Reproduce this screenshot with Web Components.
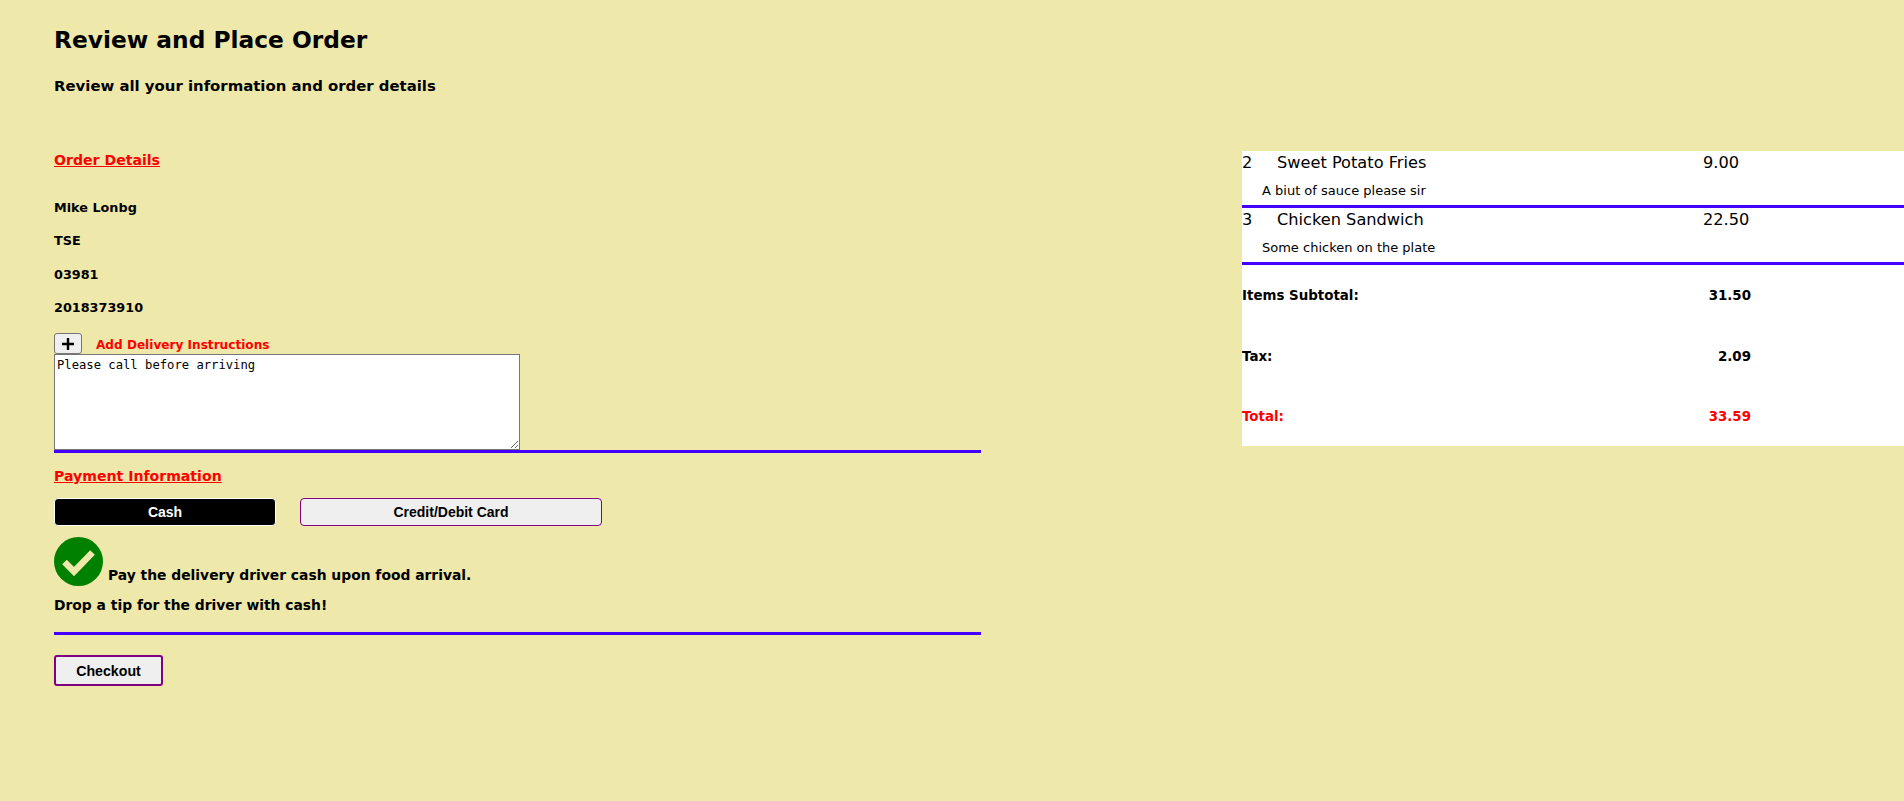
<!DOCTYPE html>
<html lang="en">
<head>
<meta charset="utf-8">
<title>Review and Place Order</title>
<style>
    html, body { margin: 0; height: 100%; background: #eee8aa; }
    body { font-family: "DejaVu Sans", Verdana, sans-serif; color: #000; }
</style>
</head>
<body>
<checkout-page>
    <page-header slot="header" title="Review and Place Order" subtitle="Review all your information and order details"></page-header>
    <div slot="left">
        <section-title style="--top:30px">Order Details</section-title>
        <customer-info></customer-info>
        <delivery-notes></delivery-notes>
        <blue-rule></blue-rule>
        <section-title style="--top:15px">Payment Information</section-title>
        <payment-picker></payment-picker>
        <blue-rule style="--top:18px"></blue-rule>
        <checkout-button></checkout-button>
    </div>
    <order-summary slot="right">
        <order-item qty="2" name="Sweet Potato Fries" price="9.00" note="A biut of sauce please sir"></order-item>
        <order-item qty="3" name="Chicken Sandwich" price="22.50" note="Some chicken on the plate"></order-item>
        <summary-line label="Items Subtotal:" value="31.50"></summary-line>
        <summary-line label="Tax:" value="2.09"></summary-line>
        <summary-line label="Total:" value="33.59" style="color:#f00"></summary-line>
    </order-summary>
</checkout-page>

<script>
// Page shell: header on top, then the two columns
class CheckoutPage extends HTMLElement {
    constructor() {
        super();
        this.attachShadow({ mode: 'open' });
        this.shadowRoot.innerHTML = `
            <style>
                :host { display: block; padding-left: 54px; }
                .cols { display: grid; grid-template-columns: 927px 1fr; column-gap: 261px; }
            </style>
            <slot name="header"></slot>
            <div class="cols">
                <slot name="left"></slot>
                <slot name="right"></slot>
            </div>
        `;
    }
}

class PageHeader extends HTMLElement {
    constructor() {
        super();
        this.attachShadow({ mode: 'open' });
    }

    connectedCallback() {
        this.shadowRoot.innerHTML = `
            <style>
                :host { display: block; height: 122px; padding-top: 25px; box-sizing: border-box; }
                h1 { margin: 0; font-size: 23.3px; line-height: 29px; font-weight: bold; }
                h2 { margin: 23px 0 0; font-size: 14.9px; line-height: 19px; font-weight: bold; }
            </style>
            <h1>${this.getAttribute('title')}</h1>
            <h2>${this.getAttribute('subtitle')}</h2>
        `;
        this.removeAttribute('title');
    }
}

class SectionTitle extends HTMLElement {
    constructor() {
        super();
        this.attachShadow({ mode: 'open' });
        this.shadowRoot.innerHTML = `
            <style>
                :host {
                    display: block;
                    margin-top: var(--top, 0);
                    font-size: 14.1px;
                    line-height: 17px;
                    font-weight: bold;
                    color: #f00;
                    text-decoration: underline;
                }
            </style>
            <slot></slot>
        `;
    }
}

class CustomerInfo extends HTMLElement {
    constructor() {
        super();
        this.attachShadow({ mode: 'open' });
        this.shadowRoot.innerHTML = `
            <style>
                :host {
                    display: flex;
                    flex-direction: column;
                    gap: 18px;
                    margin-top: 31px;
                    font-size: 12.8px;
                    line-height: 15.4px;
                    font-weight: bold;
                }
            </style>
            <div>Mike Lonbg</div>
            <div>TSE</div>
            <div>03981</div>
            <div>2018373910</div>
        `;
    }
}

class DeliveryNotes extends HTMLElement {
    constructor() {
        super();
        this.attachShadow({ mode: 'open' });
        this.shadowRoot.innerHTML = `
            <style>
                :host { display: block; margin-top: 17.4px; }
                .head { display: flex; align-items: center; height: 21px; }
                button {
                    width: 28px;
                    height: 21px;
                    padding: 0;
                    box-sizing: border-box;
                    background: #efefef;
                    border: 1px solid #767676;
                    border-radius: 3px;
                    display: flex;
                    align-items: center;
                    justify-content: center;
                }
                label {
                    margin-left: 14px;
                    padding-top: 2px;
                    font-size: 12.1px;
                    font-weight: bold;
                    color: #f00;
                }
                textarea {
                    display: block;
                    width: 466px;
                    height: 96px;
                    box-sizing: border-box;
                    margin: 0;
                    padding: 3px 2px 2px;
                    border: 1px solid #767676;
                    background: #fff;
                    color: #000;
                    font-family: "DejaVu Sans Mono", monospace;
                    font-size: 12.2px;
                    border-radius: 0;
                }
            </style>
            <div class="head">
                <button type="button" aria-label="Add">
                    <svg width="12" height="12" viewBox="0 0 12 12"><path d="M6 0v12M0 6h12" stroke="#000" stroke-width="2.400" fill="none"/></svg>
                </button>
                <label>Add Delivery Instructions</label>
            </div>
            <textarea>Please call before arriving</textarea>
        `;
    }
}

class BlueRule extends HTMLElement {
    constructor() {
        super();
        this.attachShadow({ mode: 'open' });
        this.shadowRoot.innerHTML = `
            <style>
                :host { display: block; height: 3px; margin-top: var(--top, 0); background: #4400ff; }
            </style>
        `;
    }
}

class PaymentPicker extends HTMLElement {
    constructor() {
        super();
        this.attachShadow({ mode: 'open' });
        this.shadowRoot.innerHTML = `
            <style>
                :host { display: block; margin-top: 13px; font-size: 13.87px; font-weight: bold; }
                .tabs { display: flex; gap: 24px; }
                button {
                    height: 28px;
                    padding: 0;
                    box-sizing: border-box;
                    border-radius: 4px;
                    font: bold 14px "Liberation Sans", Arial, sans-serif;
                }
                .cash { width: 222px; background: #000; color: #fff; border: 1px solid #fff; }
                .card { width: 302px; background: #efefef; color: #000; border: 1px solid #800080; }
                .msg { display: flex; align-items: flex-end; gap: 5px; margin-top: 11px; }
                .msg span { line-height: 17px; margin-bottom: 2px; }
                .tip { margin-top: 11px; line-height: 17px; }
            </style>
            <div class="tabs">
                <button class="cash" type="button">Cash</button>
                <button class="card" type="button">Credit/Debit Card</button>
            </div>
            <div class="msg">
                <svg width="49" height="49" viewBox="0 0 49 49">
                    <circle cx="24.5" cy="24.5" r="24.5" fill="#008000"/>
                    <path d="M10.500 25l9.500 9.500L38.500 15.500" fill="none" stroke="#eee8aa" stroke-width="6.500"/>
                </svg>
                <span>Pay the delivery driver cash upon food arrival.</span>
            </div>
            <div class="tip">Drop a tip for the driver with cash!</div>
        `;
    }
}

class CheckoutButton extends HTMLElement {
    constructor() {
        super();
        this.attachShadow({ mode: 'open' });
        this.shadowRoot.innerHTML = `
            <style>
                :host { display: block; margin-top: 20px; }
                button {
                    display: block;
                    width: 109px;
                    height: 31px;
                    padding: 0;
                    box-sizing: border-box;
                    background: #efefef;
                    border: 2px solid #800080;
                    border-radius: 3px;
                    color: #000;
                    font: bold 14.2px "Liberation Sans", Arial, sans-serif;
                }
            </style>
            <button type="button">Checkout</button>
        `;
    }
}

class OrderSummary extends HTMLElement {
    constructor() {
        super();
        this.attachShadow({ mode: 'open' });
        this.shadowRoot.innerHTML = `
            <style>
                :host {
                    display: block;
                    align-self: start;
                    margin-top: 29px;
                    height: 295px;
                    background: #fff;
                }
            </style>
            <slot></slot>
        `;
    }
}

class OrderItem extends HTMLElement {
    constructor() {
        super();
        this.attachShadow({ mode: 'open' });
    }

    connectedCallback() {
        const qty = this.getAttribute('qty');
        const name = this.getAttribute('name');
        const price = this.getAttribute('price');
        const note = this.getAttribute('note');

        this.shadowRoot.innerHTML = `
            <style>
                :host {
                    display: block;
                    box-sizing: border-box;
                    height: 57px;
                    border-bottom: 3px solid #4400ff;
                }
                .top {
                    display: grid;
                    grid-template-columns: 35px 426px auto;
                    font-size: 16.2px;
                    line-height: 24px;
                }
                .note { margin: 8px 0 0 20px; font-size: 13px; line-height: 16px; }
            </style>
            <div class="top"><span>${qty}</span><span>${name}</span><span>${price}</span></div>
            <div class="note">${note}</div>
        `;
    }
}

class SummaryLine extends HTMLElement {
    constructor() {
        super();
        this.attachShadow({ mode: 'open' });
    }

    connectedCallback() {
        this.shadowRoot.innerHTML = `
            <style>
                :host {
                    display: flex;
                    justify-content: space-between;
                    width: 509px;
                    height: 60.500px;
                    padding-top: 23px;
                    box-sizing: border-box;
                    font-size: 13.4px;
                    line-height: 16px;
                    font-weight: bold;
                }
            </style>
            <span>${this.getAttribute('label')}</span>
            <span>${this.getAttribute('value')}</span>
        `;
    }
}

customElements.define('checkout-page', CheckoutPage);
customElements.define('page-header', PageHeader);
customElements.define('section-title', SectionTitle);
customElements.define('customer-info', CustomerInfo);
customElements.define('delivery-notes', DeliveryNotes);
customElements.define('blue-rule', BlueRule);
customElements.define('payment-picker', PaymentPicker);
customElements.define('checkout-button', CheckoutButton);
customElements.define('order-summary', OrderSummary);
customElements.define('order-item', OrderItem);
customElements.define('summary-line', SummaryLine);
</script>
</body>
</html>
